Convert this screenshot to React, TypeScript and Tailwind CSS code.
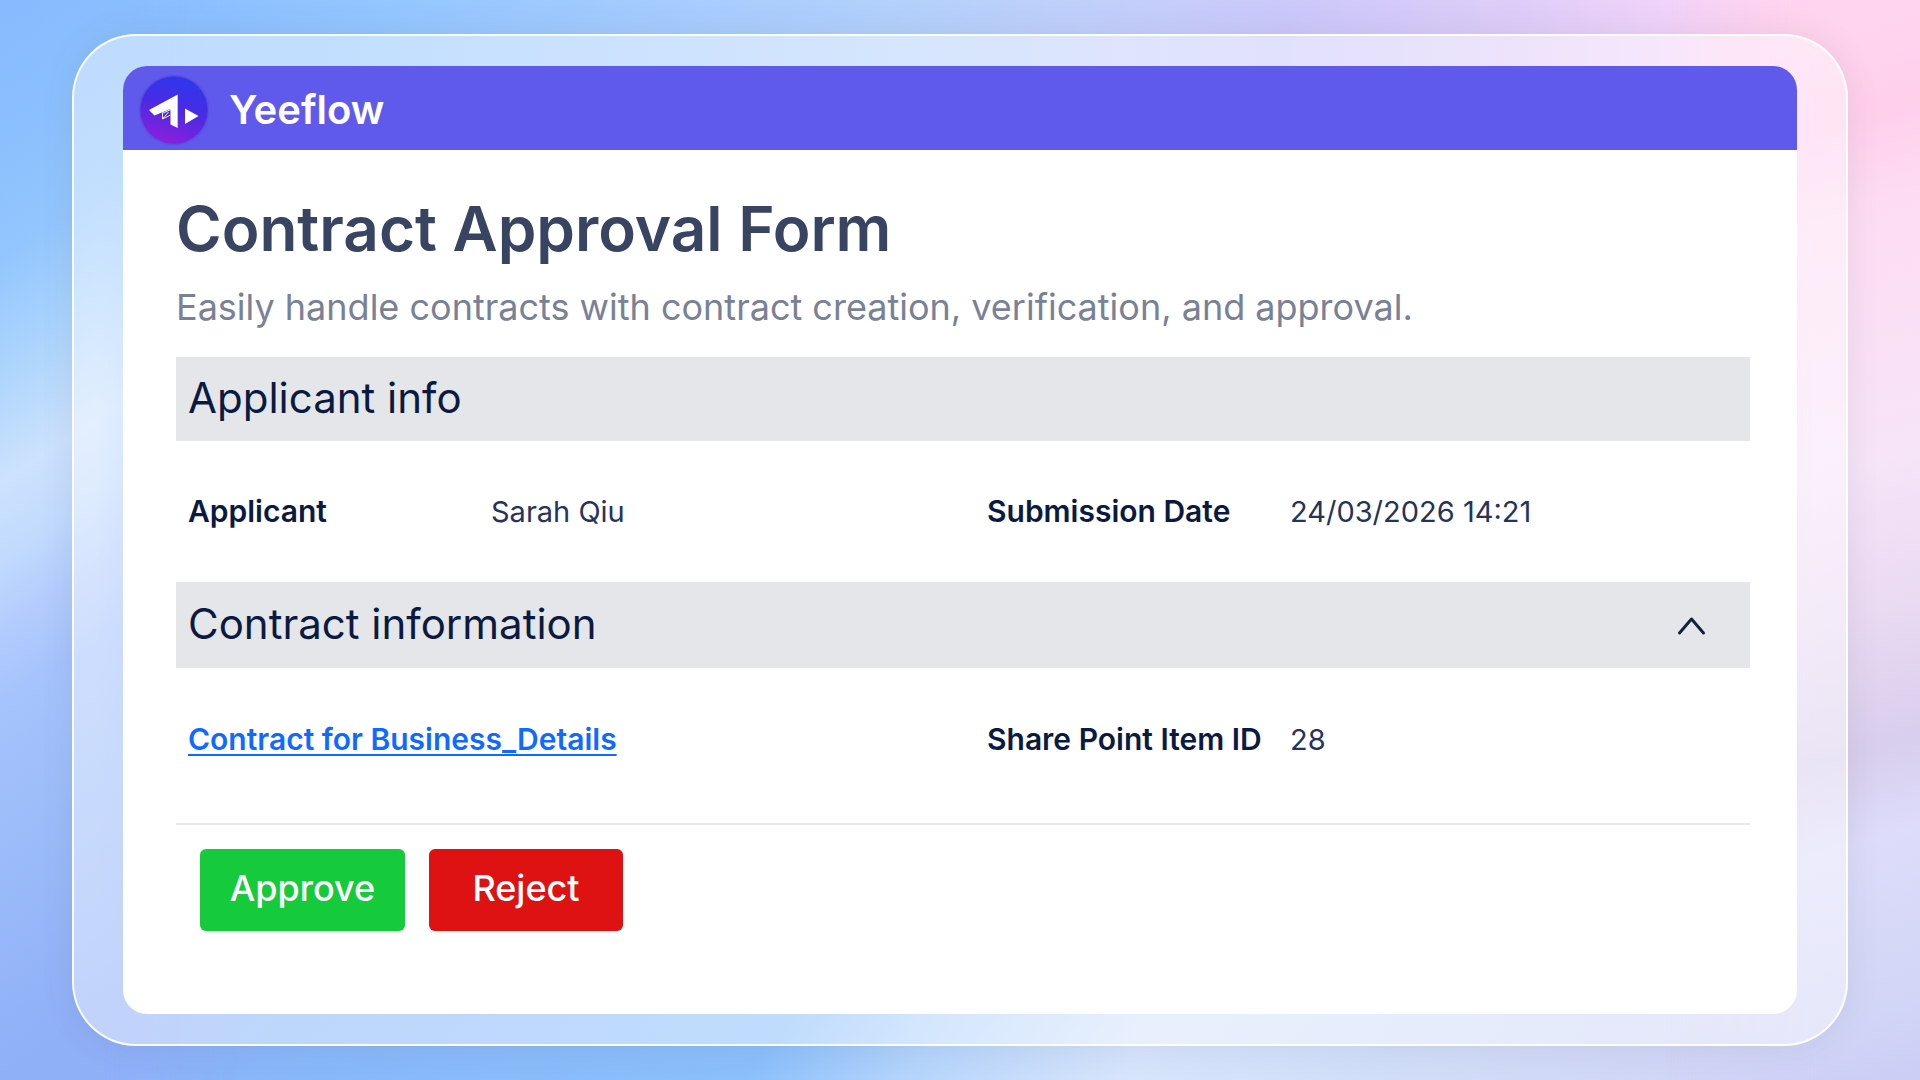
import { useState, type ReactNode } from "react"

function Logo() {
  return (
    <svg viewBox="0 0 70 70" className="size-[70px] shrink-0" aria-hidden="true">
      <defs>
        <linearGradient id="disc" x1="0.7" y1="0" x2="0.4" y2="1">
          <stop offset="0" stopColor="#2a38ee" />
          <stop offset="0.5" stopColor="#4b2ae4" />
          <stop offset="1" stopColor="#8c1fdc" />
        </linearGradient>
        <filter id="disc-shadow" x="-20%" y="-20%" width="140%" height="140%">
          <feGaussianBlur stdDeviation="1" />
        </filter>
      </defs>
      <circle cx="35" cy="35" r="34" fill="#3d2bb8" opacity="0.6" filter="url(#disc-shadow)" />
      <circle cx="35" cy="35" r="33.5" fill="url(#disc)" />
      <path d="M38.700 19.500V53L31.500 49.500V34L15.500 40.500 10 35z" fill="#fff" />
      <path
        d="M23.500 37.500V44l8-4M24 38l8-3.500M23.500 44l6-7"
        fill="none"
        stroke="#fff"
        strokeWidth="0.900"
      />
      <path d="M46 33.500v15.500l13.500-8z" fill="#fff" />
    </svg>
  )
}

function Backdrop() {
  return (
    <div className="absolute inset-0 -z-10 bg-[linear-gradient(125deg,#90aef8_28%,#88b6f8_37%,#8abffb_56%,#b4d4fb_62%,#d6e4fc_70%,#d0def9_79%,#d0d5f6_92%,#cccdf4_100%)]">
      <div className="absolute inset-0 bg-[linear-gradient(90deg,#84b9ff_0%,#93c6ff_20%,#a9cdfd_38%,#b4d1fb_48%,#c5cefa_60%,#cbc8fa_67%,#decdf8_79%,#f1d3fa_87%,#ffd0ec_96%,#ffd4ee_100%)] mask-[linear-gradient(180deg,#000_10%,transparent_80%)]" />
      <div className="absolute inset-y-0 left-0 w-60 bg-[linear-gradient(147deg,#86baff_0%,#8bc0fd_12%,#93c6fd_21%,#a9d3fd_29%,#bedcfc_35%,#cce2fd_39%,#c2dbfd_45%,#b3ccfd_51%,#a5c3fc_57%,#9bbcf9_69%,#8faff7_87%)] mask-[linear-gradient(90deg,#000_40%,transparent_100%)]" />
      <div className="absolute inset-y-0 right-0 w-64 bg-[linear-gradient(165deg,#ffd4ee_6%,#ffcfec_15%,#fddcf3_23%,#f6e4f8_45%,#eadaf2_58%,#d8ceed_70%,#dddcfa_78%,#d1d5f6_93%,#cbcef5_100%)] mask-[linear-gradient(270deg,#000_40%,transparent_100%)]" />
    </div>
  )
}

function Field({ label, children }: { label: string; children: ReactNode }) {
  return (
    <div className="flex items-center">
      <dt className="w-[303px] shrink-0 font-semibold text-[#0b1a40]">{label}</dt>
      <dd className="text-[29px] text-[#26335a]">{children}</dd>
    </div>
  )
}

export default function App() {
  const [open, setOpen] = useState(true)

  return (
    <div className="relative isolate flex min-h-screen flex-col overflow-hidden px-[72px] py-[34px] font-['Inter',sans-serif]">
      <Backdrop />

      <div className="flex flex-1 flex-col rounded-[64px] border-2 border-white/90 bg-white/45 px-[49px] py-[30px] shadow-[0_0_32px_rgba(90,90,110,0.12)]">
        <div className="flex flex-1 flex-col overflow-hidden rounded-3xl bg-white">
          <header className="flex h-[84px] items-center gap-5 bg-[#5f5aeb] pt-1 pl-4 text-[40px] font-semibold text-white">
            <Logo />
            Yeeflow
          </header>

          <main className="flex-1 pt-[39px] pr-[47px] pb-10 pl-[53px]">
            <h1 className="text-[62px] leading-[80px] font-semibold text-[#384462]">
              Contract Approval Form
            </h1>
            <p className="mt-3 text-[36px] leading-[52px] text-[#788196]">
              Easily handle contracts with contract creation, verification, and approval.
            </p>

            <section className="mt-6">
              <h2 className="flex h-[84px] items-center bg-[#e4e6e9] px-3 pb-1 text-[42px] text-[#0b1a40]">
                Applicant info
              </h2>
              <dl className="grid h-[141px] grid-cols-2 items-center gap-9 pl-3 text-[30px]">
                <Field label="Applicant">Sarah Qiu</Field>
                <Field label="Submission Date">24/03/2026 14:21</Field>
              </dl>
            </section>

            <section>
              <div className="flex h-[86px] items-center justify-between bg-[#e4e6e9] pr-11 pl-3">
                <h2 className="pb-1 text-[42px] text-[#0b1a40]">Contract information</h2>
                <button
                  type="button"
                  aria-label="Toggle contract information"
                  aria-expanded={open}
                  onClick={() => setOpen(!open)}
                >
                  <svg
                    viewBox="0 0 30 30"
                    className={open ? "size-[30px]" : "size-[30px] rotate-180"}
                    fill="none"
                    stroke="#14203f"
                    strokeWidth="3"
                    strokeLinecap="round"
                    strokeLinejoin="round"
                  >
                    <path d="M3.500 23L15.500 9l12 14" />
                  </svg>
                </button>
              </div>
              {open && (
                <div className="grid h-[155px] grid-cols-2 items-center gap-9 pb-3 pl-3 text-[30px]">
                  <a
                    href="#contract"
                    className="font-semibold text-[#0f6bff] underline decoration-2 underline-offset-4"
                  >
                    Contract for Business_Details
                  </a>
                  <dl>
                    <Field label="Share Point Item ID">28</Field>
                  </dl>
                </div>
              )}
            </section>

            <div className="flex gap-6 border-t-2 border-[#e6e8eb] pt-6 pl-6 text-[36px] font-medium text-white">
              <button type="button" className="h-[82px] w-[205px] rounded-md bg-[#15ca3b] pb-1">
                Approve
              </button>
              <button type="button" className="h-[82px] w-[194px] rounded-md bg-[#de1212] pb-1">
                Reject
              </button>
            </div>
          </main>
        </div>
      </div>
    </div>
  )
}
